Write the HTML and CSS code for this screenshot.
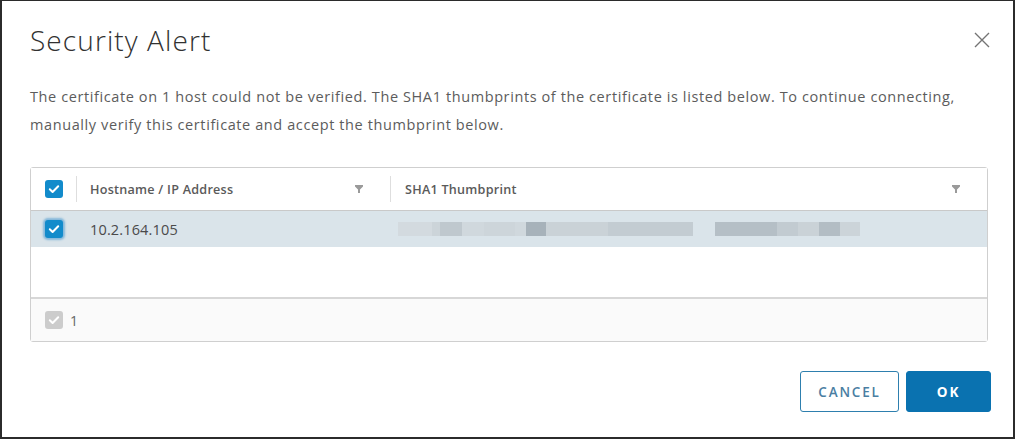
FILE: index.html
```html
<!DOCTYPE html>
<html>
<head>
<meta charset="utf-8">
<link rel="stylesheet" href="styles.css">
</head>
<body>
<div class="dialog">
  <div class="head">
    <h1 class="title">Security Alert</h1>
    <button class="close" aria-label="Close">
      <svg width="16" height="16" viewBox="0 0 16 16"><path d="M1 1L15 15M15 1L1 15" stroke="#747474" stroke-width="1.4" fill="none"/></svg>
    </button>
  </div>
  <p class="msg">The certificate on 1 host could not be verified. The SHA1 thumbprints of the certificate is listed below. To continue connecting, manually verify this certificate and accept the thumbprint below.</p>
  <div class="grid">
    <div class="grid-head">
      <div class="c-check">
        <span class="cb on"><svg width="18" height="18" viewBox="0 0 18 18"><path d="M4.8 9.3L7.6 12L13.2 6.2" stroke="#fff" stroke-width="2" fill="none" stroke-linecap="round" stroke-linejoin="round"/></svg></span>
      </div>
      <span class="sep"></span>
      <div class="c-host hcell">
        <span>Hostname / IP Address</span>
        <svg class="filter" width="8" height="8" viewBox="0 0 8 8"><path d="M0 0H8V1.5L5 4.5V8H3V4.5L0 1.5Z" fill="#9a9a9a"/></svg>
      </div>
      <span class="sep"></span>
      <div class="c-sha hcell">
        <span>SHA1 Thumbprint</span>
        <svg class="filter" width="8" height="8" viewBox="0 0 8 8"><path d="M0 0H8V1.5L5 4.5V8H3V4.5L0 1.5Z" fill="#9a9a9a"/></svg>
      </div>
    </div>
    <div class="grid-row">
      <div class="c-check">
        <span class="cb on focus"><svg width="18" height="18" viewBox="0 0 18 18"><path d="M4.8 9.3L7.6 12L13.2 6.2" stroke="#fff" stroke-width="2" fill="none" stroke-linecap="round" stroke-linejoin="round"/></svg></span>
      </div>
      <span class="sep blank"></span>
      <div class="c-host rcell">10.2.164.105</div>
      <span class="sep blank"></span>
      <div class="c-sha rcell"><span class="blur"></span></div>
    </div>
    <div class="grid-empty"></div>
    <div class="grid-foot">
      <span class="cb off"><svg width="18" height="18" viewBox="0 0 18 18"><path d="M4.8 9.3L7.6 12L13.2 6.2" stroke="#fff" stroke-width="2" fill="none" stroke-linecap="round" stroke-linejoin="round"/></svg></span>
      <span class="count">1</span>
    </div>
  </div>
  <div class="actions">
    <button class="btn btn-outline">CANCEL</button>
    <button class="btn btn-primary">OK</button>
  </div>
</div>
</body>
</html>
```

FILE: styles.css
```css
* { box-sizing: border-box; }
html, body { margin: 0; padding: 0; background: #fff; }
body { font-family: "Open Sans", "Liberation Sans", sans-serif; }

.dialog {
  width: 1015px;
  height: 439px;
  border: 2px solid #2b2b2b;
  border-top-width: 1px;
  padding: 0 25px 0 28px;
  display: flex;
  flex-direction: column;
  background: #fff;
}

.head {
  display: flex;
  align-items: center;
  justify-content: space-between;
  height: 76px;
  padding-top: 1px;
}
.title {
  margin: 0;
  font-weight: 300;
  font-size: 28px;
  color: #313131;
  letter-spacing: 1.1px;
}
.close {
  border: 0;
  background: none;
  padding: 0;
  margin-right: -2px;
  width: 16px;
  height: 16px;
  display: flex;
  cursor: pointer;
}

.msg {
  margin: 6px 0 0;
  font-size: 14.5px;
  line-height: 28px;
  color: #5c5c5c;
  letter-spacing: 0.6px;
}

.grid {
  margin-top: 28px;
  border: 1px solid #cfcfcf;
  border-radius: 3px;
  display: flex;
  flex-direction: column;
  width: 958px;
}
.grid-head {
  display: flex;
  align-items: center;
  height: 43px;
  border-bottom: 1px solid #c9c9c9;
  background: #fff;
}
.grid-row {
  display: flex;
  align-items: center;
  height: 36px;
  background: #dae4ea;
}
.grid-empty {
  height: 52px;
  border-bottom: 2px solid #d7d7d7;
}
.grid-foot {
  display: flex;
  align-items: center;
  height: 42px;
  padding-left: 14px;
  background: #fafafa;
}

.c-check {
  width: 45px;
  padding-left: 14px;
  display: flex;
  align-items: center;
}
.sep {
  width: 1px;
  height: 26px;
  background: #dedede;
}
.sep.blank { background: transparent; }
.c-host { width: 313px; }
.c-sha { flex: 1; }
.hcell {
  display: flex;
  align-items: center;
  justify-content: space-between;
  font-size: 12.6px;
  font-weight: 600;
  color: #5a5a5a;
  letter-spacing: 0.25px;
}
.c-host.hcell { padding: 0 27px 0 13px; }
.c-sha.hcell { padding: 0 27px 0 14px; }
.filter { display: block; }

.rcell {
  font-size: 14.5px;
  color: #4a4a4a;
  letter-spacing: 0.15px;
}
.c-host.rcell { padding-left: 13px; }
.c-sha.rcell { padding-left: 7px; display: flex; align-items: center; }

.blur {
  display: block;
  width: 462px;
  height: 14px;
  background: linear-gradient(to right,
    #d3dadf 0px, #d3dadf 34px,
    #ccd4d9 34px, #ccd4d9 42px,
    #bfc8ce 42px, #bfc8ce 64px,
    #d0d8dd 64px, #d0d8dd 86px,
    #cdd5da 86px, #cdd5da 117px,
    #d0d8dd 117px, #d0d8dd 128px,
    #a7b2ba 128px, #a7b2ba 148px,
    #cad2d7 148px, #cad2d7 210px,
    #c3ccd2 210px, #c3ccd2 295px,
    transparent 295px, transparent 317px,
    #b5bfc6 317px, #b5bfc6 379px,
    #c2cbd1 379px, #c2cbd1 400px,
    #cad2d7 400px, #cad2d7 421px,
    #b3bdc4 421px, #b3bdc4 442px,
    #ccd4d9 442px, #ccd4d9 462px);
}

.cb {
  width: 18px;
  height: 18px;
  border-radius: 3px;
  display: flex;
}
.cb.on { background: #128bcb; }
.cb.focus { box-shadow: 0 0 2px 2px rgba(30, 130, 200, 0.45); }
.cb.off { background: #cccccc; }
.count {
  margin-left: 7px;
  font-size: 14px;
  color: #666;
}

.actions {
  margin-top: 29px;
  margin-right: -3px;
  display: flex;
  justify-content: flex-end;
  gap: 7px;
}
.btn {
  height: 41px;
  border-radius: 3px;
  font-family: "Open Sans", "Liberation Sans", sans-serif;
  font-size: 13.5px;
  letter-spacing: 1.8px;
  cursor: pointer;
}
.btn-outline {
  width: 99px;
  border: 1px solid #2e7fae;
  background: #fff;
  color: #4a7ea2;
  font-weight: 600;
}
.btn-primary {
  width: 85px;
  border: 1px solid #0a72b0;
  background: #0a72b0;
  color: #fff;
  font-weight: 700;
}
```
